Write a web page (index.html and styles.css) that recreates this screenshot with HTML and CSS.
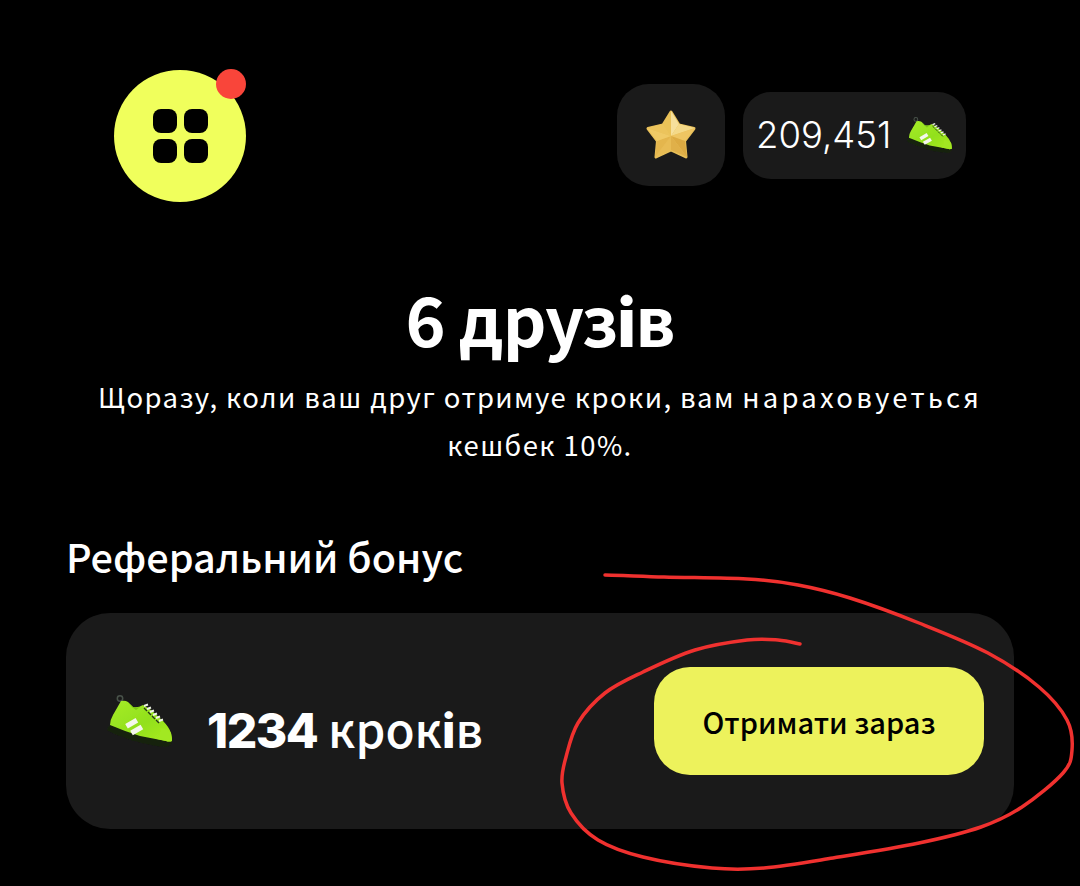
FILE: index.html
```html
<!DOCTYPE html>
<html lang="uk">
<head>
<meta charset="utf-8">
<title>6 друзів</title>
<link rel="stylesheet" href="styles.css">
</head>
<body>
<svg class="defs" width="0" height="0" aria-hidden="true">
  <defs>
    <linearGradient id="upper" x1="0" y1="0" x2="1" y2="1">
      <stop offset="0" stop-color="#a6ec28"/>
      <stop offset=".55" stop-color="#92e01c"/>
      <stop offset="1" stop-color="#aaec22"/>
    </linearGradient>
    <filter id="soften" x="-5%" y="-5%" width="110%" height="110%">
      <feGaussianBlur stdDeviation="0.4"/>
    </filter>
    <symbol id="shoe" viewBox="0 0 66 52">
      <g filter="url(#soften)">
        <circle cx="14" cy="3.500" r="2.700" fill="none" stroke="#48524a" stroke-width="1.500"/>
        <path d="M1 35 Q1 32 4 30 L34 41 L61 45 L66 46 Q66 51 60 52 Q36 50 14 41 Q5 38 1 35Z" fill="#17210f"/>
        <path d="M15 6 Q19 5 22 7 L27 12 Q32 13 37 10 L45 15 L57 26 Q63 32 65 38 Q66 43 66 46 Q63 47 60 46 L34 41 Q18 36 4 30 Q4 25 7 20 Q11 13 15 6Z" fill="url(#upper)"/>
        <path d="M22 7 L27 12 Q31 13 34 12 L30 15 Q25 12 22 7Z" fill="#7cc712"/>
        <path d="M54 33 Q61 33 65 38 Q66 43 66 46 Q63 47 60 46 L51 44 Q55 40 54 33Z" fill="#a2e820"/>
        <path d="M38 11 L42 9.500 M41 14 L45 12.500 M44 17 L48 15.500 M47 20 L51 18.500 M50 23 L54 21.500 M53 26 L57 24.500" stroke="#eef2e6" stroke-width="1.900"/>
        <path d="M38 13 L41 16 M42 17 L45 20 M46 21 L49 24 M50 25 L53 28" stroke="#25331c" stroke-width="1.300"/>
        <path d="M19.200 29.100 L29.600 23.100 L32.200 27.500 L21.800 33.500Z M24.200 35.800 L34.600 29.800 L37.200 34.200 L26.800 40.200Z" fill="#f4f7ec"/>
      </g>
    </symbol>
  </defs>
</svg>

<main class="app">
  <header class="topbar">
    <div class="menu">
      <div class="menu-grid">
        <span class="tile"></span><span class="tile"></span>
        <span class="tile"></span><span class="tile"></span>
      </div>
      <span class="badge"></span>
    </div>
    <div class="stats">
      <div class="star-card">
        <svg class="star" viewBox="0 0 52 50" aria-hidden="true">
          <g filter="url(#soften)">
            <path d="M26 2 L34 15 L49 18.500 L39.500 31 L41 47 L26 40 L11 47 L12.500 31 L3 18.500 L18 15Z" fill="#e8bf58" stroke="#e8bf58" stroke-width="3" stroke-linejoin="round"/>
            <path d="M26 26 L26 1 L34 14Z" fill="#f6e09c"/>
            <path d="M26 26 L34 14 L50 18Z" fill="#f4d988"/>
            <path d="M26 26 L50 18 L40 31Z" fill="#eec562"/>
            <path d="M26 26 L40 31 L42 47Z" fill="#dcaa42"/>
            <path d="M26 26 L42 47 L26 40Z" fill="#e0b04a"/>
            <path d="M26 26 L26 40 L10 47Z" fill="#e8bc54"/>
            <path d="M26 26 L10 47 L12 31Z" fill="#e4b64e"/>
            <path d="M26 26 L12 31 L2 18Z" fill="#f0ca66"/>
            <path d="M26 26 L2 18 L18 14Z" fill="#ecc45c"/>
            <path d="M26 26 L18 14 L26 1Z" fill="#eac259"/>
          </g>
        </svg>
      </div>
      <div class="balance">
        <span class="balance-value">209,451</span>
        <svg class="shoe-small" aria-hidden="true"><use href="#shoe"/></svg>
      </div>
    </div>
  </header>

  <section class="intro">
    <h1 class="intro-title">6 друз<span class="heavy">і</span>в</h1>
    <p class="intro-text">Щоразу, коли ваш друг отримуе кроки, вам <span class="wide">нараховуеться</span> кешбек 10%.</p>
  </section>

  <section class="bonus">
    <h2 class="bonus-title">Реферальний бонус</h2>
    <div class="bonus-card">
      <div class="bonus-info">
        <svg class="shoe-large" aria-hidden="true"><use href="#shoe"/></svg>
        <span class="bonus-amount"><span class="digits">1234</span> крок<span class="heavy">і</span>в</span>
      </div>
      <button class="claim" type="button">Отримати зараз</button>
    </div>
  </section>
</main>

<svg class="scribble" viewBox="0 0 1080 886" aria-hidden="true">
  <path d="M605 575C615 575 640.300 576.300 664 577C687.700 577.700 724.700 577.700 747 579C769.300 580.300 780.800 581.800 798 585C815.200 588.200 829.800 591.700 850 598C870.200 604.300 896 613.800 919 623C942 632.200 968 642.300 988 653C1008 663.700 1025.800 675.800 1039 687C1052.200 698.200 1061.500 709.500 1067 720C1072.500 730.500 1072.700 741.200 1072 750C1071.300 758.800 1071.300 763.500 1063 773C1054.700 782.500 1035.700 798 1022 807C1008.300 816 998.200 821 981 827C963.800 833 943.700 837.800 919 843C894.300 848.200 858.800 853.800 833 858C807.200 862.200 784.200 866.300 764 868C743.800 869.700 732.200 869.800 712 868C691.800 866.200 662 861.700 643 857C624 852.300 610 847.300 598 840C586 832.700 577 822.500 571 813C565 803.500 562.800 792.300 562 783C561.200 773.700 563.300 767 566 757C568.700 747 571.500 733.700 578 723C584.500 712.300 594.200 701.500 605 693C615.800 684.500 628 679.200 643 672C658 664.800 677.700 655.300 695 650C712.300 644.700 733.200 641.700 747 640C760.800 638.300 769.200 639.300 778 640C786.800 640.700 796.300 643.300 800 644"/>
</svg>
</body>
</html>
```

FILE: styles.css
```css
* {
  box-sizing: border-box;
}

html,
body {
  margin: 0;
  height: 100%;
  background: #000;
  overflow: hidden;
}

body {
  position: relative;
  color: #fff;
  font-family: "Noto Sans CJK SC", "Noto Sans", sans-serif;
}

.defs {
  position: absolute;
}

.app {
  display: flex;
  flex-direction: column;
  padding: 70px 66px 0;
}

.topbar {
  display: flex;
  align-items: center;
  justify-content: space-between;
  padding: 0 48px;
}

.menu {
  position: relative;
  width: 132px;
  height: 132px;
  display: flex;
  align-items: center;
  justify-content: center;
  border-radius: 50%;
  background: #f0ff5c;
}

.menu-grid {
  display: grid;
  grid-template-columns: 24px 24px;
  grid-auto-rows: 24px;
  gap: 6px 7px;
}

.tile {
  border-radius: 8px;
  background: #000;
}

.badge {
  position: absolute;
  top: -1px;
  right: 0;
  width: 30px;
  height: 30px;
  border-radius: 50%;
  background: #f9453a;
}

.stats {
  display: flex;
  align-items: center;
  gap: 18px;
  margin-top: -2px;
}

.star-card {
  width: 108px;
  height: 102px;
  display: flex;
  align-items: center;
  justify-content: center;
  border-radius: 32px;
  background: #1a1a1a;
}

.star {
  width: 52px;
  height: 50px;
}

.balance {
  width: 223px;
  height: 87px;
  display: flex;
  align-items: center;
  gap: 15px;
  padding-left: 13px;
  border-radius: 28px;
  background: #1a1a1a;
}

.balance-value {
  font-family: Inter, "Noto Sans", sans-serif;
  font-size: 36.500px;
  font-weight: 300;
}

.shoe-small {
  width: 46px;
  height: 36px;
}

.intro {
  margin-top: 70px;
  text-align: center;
}

.intro-title {
  margin: 0;
  font-size: 68px;
  line-height: 92px;
  font-weight: 700;
  letter-spacing: -1px;
}

.heavy {
  font-family: Inter, "Noto Sans", sans-serif;
  font-weight: 800;
}

.intro-text {
  margin: 4px auto 0;
  width: 920px;
  font-size: 27.500px;
  font-weight: 400;
  line-height: 48px;
  letter-spacing: 1.400px;
}

.wide {
  letter-spacing: 3.200px;
}

.bonus {
  margin-top: 62px;
}

.bonus-title {
  margin: 0 0 31px;
  font-size: 39.600px;
  line-height: 52px;
  font-weight: 500;
}

.bonus-card {
  height: 216px;
  display: flex;
  align-items: center;
  justify-content: space-between;
  padding: 0 30px 0 40px;
  border-radius: 44px;
  background: #1a1a1a;
}

.bonus-info {
  display: flex;
  align-items: center;
  gap: 35px;
}

.shoe-large {
  width: 66px;
  height: 52px;
}

.bonus-amount {
  margin-top: 12px;
  font-size: 47.500px;
  font-weight: 500;
}

.digits {
  font-family: Inter, "Noto Sans", sans-serif;
  font-size: 48px;
  font-weight: 800;
  letter-spacing: -1.500px;
}

.claim {
  width: 330px;
  height: 108px;
  border: 0;
  border-radius: 36px;
  background: #edf25c;
  color: #000;
  font-family: "Noto Sans CJK SC", "Noto Sans", sans-serif;
  font-size: 29px;
  font-weight: 500;
}

.scribble {
  position: absolute;
  inset: 0;
  width: 1080px;
  height: 886px;
  fill: none;
  stroke: #f0312f;
  stroke-width: 3.500;
  stroke-linecap: round;
  pointer-events: none;
}
```
